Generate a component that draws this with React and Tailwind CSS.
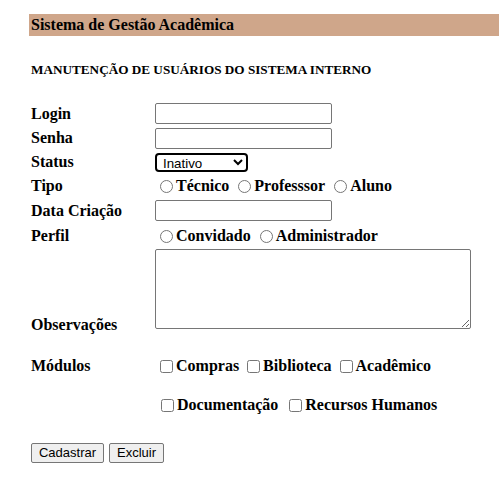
import React, { useState } from 'react';

const serif = { fontFamily: '"Liberation Serif", "Times New Roman", serif' };

function Radio({ name, label, checked, onChange }) {
    return (
        <label className="flex items-center">
            <input
                type="radio"
                name={name}
                checked={checked}
                onChange={onChange}
                className="m-0 ml-[5px] mr-[3px] h-[13px] w-[13px]"
            />
            <span>{label}</span>
        </label>
    );
}

function Check({ label, first }) {
    return (
        <label className="flex items-center">
            <input
                type="checkbox"
                className={`m-0 mr-[3px] h-[13px] w-[13px] ${first ? 'ml-[6px]' : 'ml-[5px]'}`}
            />
            <span>{label}</span>
        </label>
    );
}

function TextBox() {
    return (
        <input
            type="text"
            className="h-[21px] w-[177px] rounded-[2px] border border-[#767676] bg-white px-[2px] text-[13px]"
            style={{ fontFamily: '"Liberation Sans", Arial, sans-serif' }}
        />
    );
}

function App() {
    const [tipo, setTipo] = useState('');
    const [perfil, setPerfil] = useState('');

    return (
        <div className="min-h-[499px] bg-white pt-[14px] text-black" style={serif}>
            <div className="ml-[29px] flex h-[22px] items-center bg-[#cfa68a] pl-[2px]">
                <h1 className="text-[16px] font-bold leading-[18px]">Sistema de Gestão Acadêmica</h1>
            </div>

            <div className="pl-[31px]">
                <h2 className="mt-[26px] text-[13.2px] font-bold leading-[15px]">
                    MANUTENÇÃO DE USUÁRIOS DO SISTEMA INTERNO
                </h2>

                <form className="mt-[24px] text-[16px] font-bold leading-[18px]">
                    <div className="flex h-[25px] items-center">
                        <span className="w-[124px]">Login</span>
                        <TextBox />
                    </div>
                    <div className="flex h-[24px] items-center">
                        <span className="w-[124px]">Senha</span>
                        <TextBox />
                    </div>
                    <div className="flex h-[24px] items-center">
                        <span className="w-[124px]">Status</span>
                        <select
                            defaultValue="inativo"
                            className="h-[19px] w-[93px] rounded-[4px] border-2 border-black bg-white pl-[2px] text-[13.33px] font-normal"
                            style={{ fontFamily: '"Liberation Sans", Arial, sans-serif' }}
                        >
                            <option value="ativo">Ativo</option>
                            <option value="inativo">Inativo</option>
                        </select>
                    </div>
                    <div className="flex h-[24px] items-center">
                        <span className="w-[124px]">Tipo</span>
                        <div className="flex items-center gap-[4px]">
                            <Radio name="tipo" label="Técnico" checked={tipo === 't'} onChange={() => setTipo('t')} />
                            <Radio name="tipo" label="Professsor" checked={tipo === 'p'} onChange={() => setTipo('p')} />
                            <Radio name="tipo" label="Aluno" checked={tipo === 'a'} onChange={() => setTipo('a')} />
                        </div>
                    </div>
                    <div className="flex h-[25px] items-center">
                        <span className="w-[124px]">Data Criação</span>
                        <TextBox />
                    </div>
                    <div className="flex h-[26px] items-center">
                        <span className="w-[124px]">Perfil</span>
                        <div className="flex items-center gap-[4px]">
                            <Radio name="perfil" label="Convidado" checked={perfil === 'c'} onChange={() => setPerfil('c')} />
                            <Radio name="perfil" label="Administrador" checked={perfil === 'a'} onChange={() => setPerfil('a')} />
                        </div>
                    </div>
                    <div className="flex items-end">
                        <span className="mb-[-5px] w-[124px]">Observações</span>
                        <textarea className="block h-[80px] w-[316px] rounded-[2px] border border-[#767676] bg-white" />
                    </div>

                    <div className="mt-[25px] flex h-[24px] items-center">
                        <span className="w-[124px]">Módulos</span>
                        <div className="flex items-center gap-[3px]">
                            <Check label="Compras" />
                            <Check label="Biblioteca" />
                            <Check label="Acadêmico" />
                        </div>
                    </div>
                    <div className="mt-[15px] flex h-[24px] items-center">
                        <span className="w-[124px]" />
                        <div className="flex items-center gap-[6px]">
                            <Check label="Documentação" first />
                            <Check label="Recursos Humanos" />
                        </div>
                    </div>

                    <div
                        className="mt-[26px] flex gap-[5px] text-[13px] font-normal"
                        style={{ fontFamily: '"Liberation Sans", Arial, sans-serif' }}
                    >
                        <button type="button" className="h-[20px] w-[73px] rounded-[2px] border border-[#767676] bg-[#efefef] leading-[16px]">
                            Cadastrar
                        </button>
                        <button type="button" className="h-[20px] w-[55px] rounded-[2px] border border-[#767676] bg-[#efefef] leading-[16px]">
                            Excluir
                        </button>
                    </div>
                </form>
            </div>
        </div>
    );
}

export default App;
